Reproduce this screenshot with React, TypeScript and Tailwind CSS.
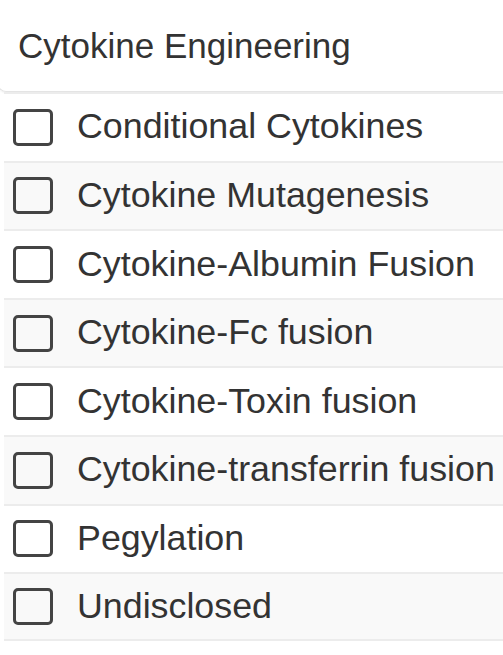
const options = [
  'Conditional Cytokines',
  'Cytokine Mutagenesis',
  'Cytokine-Albumin Fusion',
  'Cytokine-Fc fusion',
  'Cytokine-Toxin fusion',
  'Cytokine-transferrin fusion',
  'Pegylation',
  'Undisclosed',
];

export default function App() {
  return (
    <div className="w-[503px] h-[655px] bg-white overflow-hidden text-[#333]" style={{ fontFamily: '"Liberation Sans", Arial, sans-serif' }}>
      <div className="h-[92px] -ml-[2px] pl-[19px] flex items-center border-b border-l border-[#e4e4e4] rounded-bl-[8px] shadow-[0_1px_2px_rgba(0,0,0,0.06)]">
        <span className="text-[35px] leading-none">Cytokine Engineering</span>
      </div>
      <ul className="ml-[4px]">
        {options.map((label, i) => (
          <li
            key={label}
            className={`h-[68.6px] flex items-center border-t-2 border-[#ececec] ${i % 2 === 1 ? 'bg-[#f9f9f9]' : 'bg-white'} ${i === options.length - 1 ? 'border-b-2' : ''}`}
          >
            <span className="ml-[9px] w-[40px] h-[37px] rounded-[5px] border-[3px] border-[#444] shrink-0" />
            <span className="ml-[24px] text-[35.8px] leading-none whitespace-nowrap">{label}</span>
          </li>
        ))}
      </ul>
    </div>
  );
}
